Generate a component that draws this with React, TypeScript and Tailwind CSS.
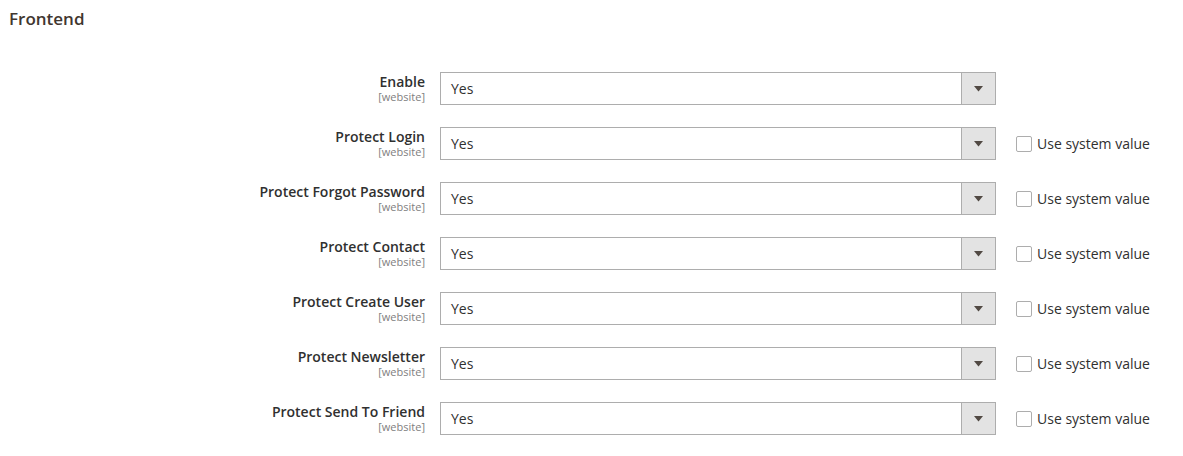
import React from "react";

const rows = [
  { label: "Enable", sys: false },
  { label: "Protect Login", sys: true },
  { label: "Protect Forgot Password", sys: true },
  { label: "Protect Contact", sys: true },
  { label: "Protect Create User", sys: true },
  { label: "Protect Newsletter", sys: true },
  { label: "Protect Send To Friend", sys: true },
];

export default function App() {
  return (
    <div
      className="w-[1183px] h-[456px] bg-white text-[#303030]"
      style={{ fontFamily: "'Open Sans', sans-serif" }}
    >
      <div className="pl-[9px] pt-[7px] text-[17px] font-semibold text-[#41362f] leading-[24px]">
        Frontend
      </div>
      <div className="mt-[41px] flex flex-col gap-[22px]">
        {rows.map((r) => (
          <div key={r.label} className="flex items-start h-[33px]">
            <div className="w-[425px] text-right pt-[1px]">
              <div className="text-[14px] font-semibold leading-[18px] text-[#303030]">
                {r.label}
              </div>
              <div className="text-[11px] leading-[11px] text-[#808080]">[website]</div>
            </div>
            <div className="ml-[15px] w-[556px] h-[33px] border border-[#adadad] flex items-stretch">
              <div className="flex-1 pl-[10px] flex items-center text-[14px]">Yes</div>
              <div className="w-[34px] bg-[#e3e3e3] border-l border-[#adadad] flex items-center justify-center">
                <svg width="9" height="6" viewBox="0 0 9 6">
                  <path d="M0 0 H9 L4.5 5.5 Z" fill="#514943" />
                </svg>
              </div>
            </div>
            {r.sys && (
              <div className="ml-[20px] h-[33px] flex items-center">
                <div className="w-[16px] h-[16px] border border-[#adadad] rounded-[2px] bg-white" />
                <span className="ml-[5px] text-[14px] text-[#303030]">Use system value</span>
              </div>
            )}
          </div>
        ))}
      </div>
    </div>
  );
}
